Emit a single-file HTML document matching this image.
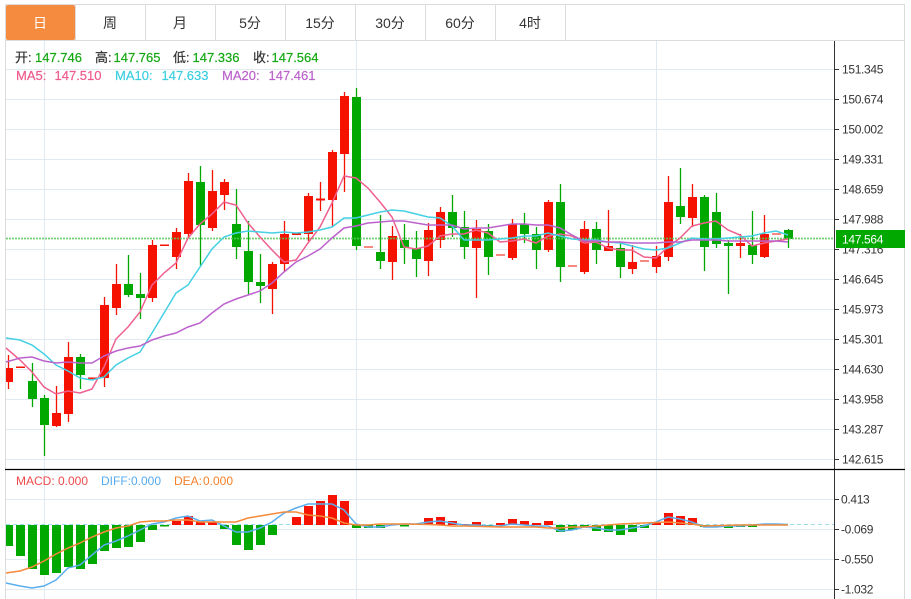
<!DOCTYPE html>
<html><head><meta charset="utf-8"><style>
html,body{margin:0;padding:0;background:#fff;width:911px;height:599px;overflow:hidden}
svg{display:block}
text{font-family:"Liberation Sans","Noto Sans CJK SC",sans-serif}
.a{font-size:12px;letter-spacing:-.33px;fill:#333}
.t{font-size:14px;fill:#333;text-anchor:middle}
.l{font-size:13px;stroke-width:.2px}
</style></head><body>
<svg width="911" height="599" viewBox="0 0 911 599" xmlns="http://www.w3.org/2000/svg">
<rect x="6" y="5" width="69" height="35" rx="2" fill="#f58b3f"/>
<path d="M5.5 4.5H904.5V599M5.5 4.5V599M5 40.5H905M75.5 5V40M145.5 5V40M215.5 5V40M285.5 5V40M355.5 5V40M425.5 5V40M495.5 5V40M565.5 5V40" fill="none" stroke="#dcdcdc" stroke-width="1"/>
<path d="M6 69.500H834M6 99.500H834M6 129.500H834M6 159.500H834M6 189.500H834M6 219.500H834M6 249.500H834M6 279.500H834M6 309.500H834M6 339.500H834M6 369.500H834M6 399.500H834M6 429.500H834M6 459.500H834M6 499.500H834M6 529.500H834M6 559.500H834M6 589.500H834M44.500 41V599M356.500 41V599M656.500 41V599" fill="none" stroke="#e0eaf0" stroke-width="1"/>
<text class="t" x="40" y="28" style="fill:#fff">日</text>
<text class="t" x="110" y="28">周</text>
<text class="t" x="180" y="28">月</text>
<text class="t" x="250" y="28">5分</text>
<text class="t" x="320" y="28">15分</text>
<text class="t" x="390" y="28">30分</text>
<text class="t" x="460" y="28">60分</text>
<text class="t" x="530" y="28">4时</text>
<path fill="#f51200" d="M6 368h7v14h-7zM52 413h9v13h-9zM64 357h9v57h-9zM100 305h9v73h-9zM112 284h9v24h-9zM148 245h9v53h-9zM172 232h9v25h-9zM184 181h9v53h-9zM208 191h9v37h-9zM220 182h9v13h-9zM268 264h9v25h-9zM280 234h9v30h-9zM304 196h9v38h-9zM328 152h9v48h-9zM340 96h9v58h-9zM388 236h9v26h-9zM424 230h9v31h-9zM436 212h9v28h-9zM472 229h9v19h-9zM508 224h9v34h-9zM544 202h9v48h-9zM580 229h9v43h-9zM604 246h9v5h-9zM628 262h9v7h-9zM652 256h9v11h-9zM664 202h9v55h-9zM688 197h9v21h-9zM736 243h9v3h-9zM760 234h9v23h-9zM16 366.500h9v1.500h-9zM88 377.500h9v1.500h-9zM160 244.500h9v1.500h-9zM292 233.500h9v1.500h-9zM316 198.500h9v2h-9z"/>
<path fill="#f78a80" d="M364 246h9v2h-9zM496 254h9v2h-9zM568 265h9v2h-9zM640 260h9v2h-9zM772 233h9v2h-9z"/>
<path stroke="#f51200" stroke-width="1.300" fill="none" d="M8.500 355v34M56.500 386v41M68.500 342v80M104.500 297v90M116.500 264v51M152.500 240v62M176.500 228v41M188.500 173v65M212.500 170v61M224.500 179v31M272.500 262v52M284.500 221v51M308.500 193v48M320.500 182v29M332.500 150v77M344.500 92v100M392.500 226v54M428.500 223v53M440.500 207v41M476.500 220v78M512.500 219v41M548.500 200v52M584.500 221v53M608.500 210v41M632.500 245v29M656.500 246v27M668.500 176v85M692.500 184v43M740.500 234v24M764.500 215v43"/>
<path fill="#00a800" d="M28 381h9v18h-9zM40 398h9v27h-9zM76 357h9v18h-9zM124 284h9v11h-9zM136 294h9v4h-9zM196 182h9v43h-9zM232 224h9v23h-9zM244 251h9v31h-9zM256 282h9v4h-9zM352 97h9v149h-9zM376 252h9v9h-9zM400 240h9v8h-9zM412 248h9v11h-9zM448 212h9v16h-9zM460 227h9v20h-9zM484 231h9v26h-9zM520 224h9v10h-9zM532 234h9v16h-9zM556 202h9v65h-9zM592 229h9v21h-9zM616 248h9v19h-9zM676 206h9v11h-9zM700 197h9v50h-9zM712 212h9v32h-9zM724 243h9v3h-9zM748 245h9v10h-9zM784 230h9v9h-9z"/>
<path stroke="#00a800" stroke-width="1.300" fill="none" d="M32.500 363v44M44.500 395v61M80.500 354v35M128.500 255v42M140.500 273v46M200.500 166v101M236.500 189v70M248.500 221v73M260.500 254v49M356.500 88v162M380.500 215v54M404.500 224v40M416.500 231v46M452.500 195v42M464.500 211v48M488.500 224v51M524.500 213v30M536.500 227v42M560.500 184v98M596.500 222v42M620.500 242v36M680.500 168v56M704.500 195v76M716.500 193v55M728.500 240v54M752.500 211v53M788.500 229v19"/>
<path d="M6 238.500H834" stroke="#5cc65c" stroke-width="1.800" stroke-dasharray="2 1" fill="none" opacity=".85"/>
<polyline fill="none" stroke="#f0608e" stroke-width="1.500" points="6,348 20,360 32,372 44,387 56,394 68,391 80,393 92,389 104,367 116,339 128,327 140,312 152,285 164,273 176,263 188,238 200,224 212,214 224,202 236,205 248,223 260,237 272,250 284,262 296,260 308,243 320,227 332,203 344,176 356,178 368,188 380,202 392,217 404,247 416,249 428,246 440,236 452,234 464,234 476,230 488,233 500,242 512,241 524,239 536,243 548,236 560,234 572,236 584,243 596,242 608,248 620,250 632,250 644,257 656,258 668,247 680,238 692,226 704,223 716,221 728,230 740,235 752,246 764,243 776,241 788,239"/>
<polyline fill="none" stroke="#45d0e4" stroke-width="1.500" points="6,338 20,340 32,345 44,354 56,365 68,371 80,378 92,380 104,377 116,365 128,358 140,352 152,333 164,313 176,293 188,285 200,267 212,249 224,237 236,233 248,231 260,232 272,233 284,232 296,233 308,232 320,230 332,227 344,218 356,218 368,215 380,212 392,210 404,211 416,214 428,217 440,218 452,226 464,240 476,240 488,240 500,239 512,238 524,236 536,236 548,233 560,236 572,239 584,240 596,240 608,242 620,243 632,246 644,249 656,250 668,248 680,243 692,238 704,239 716,239 728,238 740,237 752,236 764,233 776,231 788,235"/>
<polyline fill="none" stroke="#bb62cc" stroke-width="1.500" points="6,362 20,358 32,357 44,361 56,363 68,362 80,363 92,363 104,356 116,351 128,348 140,346 152,340 164,336 176,333 188,327 200,323 212,313 224,304 236,299 248,295 260,291 272,283 284,272 296,262 308,256 320,249 332,238 344,228 356,226 368,223 380,222 392,221 404,221 416,223 428,225 440,225 452,225 464,229 476,228 488,228 500,226 512,224 524,224 536,225 548,225 560,228 572,235 584,241 596,241 608,242 620,242 632,243 644,243 656,243 668,242 680,242 692,240 704,240 716,240 728,241 740,241 752,241 764,241 776,241 788,242"/>
<path d="M834.500 41V599M834 69.500h5M834 99.500h5M834 129.500h5M834 159.500h5M834 189.500h5M834 219.500h5M834 249.500h5M834 279.500h5M834 309.500h5M834 339.500h5M834 369.500h5M834 399.500h5M834 429.500h5M834 459.500h5M834 499.500h5M834 529.500h5M834 559.500h5M834 589.500h5" fill="none" stroke="#333" stroke-width="1"/>
<text class="a" x="842" y="73.500">151.345</text>
<text class="a" x="842" y="103.500">150.674</text>
<text class="a" x="842" y="133.500">150.002</text>
<text class="a" x="842" y="163.500">149.331</text>
<text class="a" x="842" y="193.500">148.659</text>
<text class="a" x="842" y="223.500">147.988</text>
<text class="a" x="842" y="253.500">147.316</text>
<text class="a" x="842" y="283.500">146.645</text>
<text class="a" x="842" y="313.500">145.973</text>
<text class="a" x="842" y="343.500">145.301</text>
<text class="a" x="842" y="373.500">144.630</text>
<text class="a" x="842" y="403.500">143.958</text>
<text class="a" x="842" y="433.500">143.287</text>
<text class="a" x="842" y="463.500">142.615</text>
<rect x="836" y="230" width="69" height="18" fill="#00a800"/>
<text class="a" x="842" y="243.500" style="fill:#fff">147.564</text>
<text class="l" x="15" y="62" fill="#333" stroke="#333">开:</text><text class="l" x="35" y="62" fill="#13a813" stroke="#13a813">147.746</text>
<text class="l" x="95" y="62" fill="#333" stroke="#333">高:</text><text class="l" x="113.500" y="62" fill="#13a813" stroke="#13a813">147.765</text>
<text class="l" x="173" y="62" fill="#333" stroke="#333">低:</text><text class="l" x="192.500" y="62" fill="#13a813" stroke="#13a813">147.336</text>
<text class="l" x="253" y="62" fill="#333" stroke="#333">收:</text><text class="l" x="271.500" y="62" fill="#13a813" stroke="#13a813">147.564</text>
<text class="l" x="16" y="80" fill="#ee5a8a" stroke="#ee5a8a">MA5:</text><text class="l" x="54.500" y="80" fill="#ee5a8a" stroke="#ee5a8a">147.510</text>
<text class="l" x="115" y="80" fill="#3ccfe0" stroke="#3ccfe0">MA10:</text><text class="l" x="161.500" y="80" fill="#3ccfe0" stroke="#3ccfe0">147.633</text>
<text class="l" x="222" y="80" fill="#bb62cc" stroke="#bb62cc">MA20:</text><text class="l" x="268.500" y="80" fill="#bb62cc" stroke="#bb62cc">147.461</text>
<path d="M5 469.500H905" stroke="#000" stroke-width="1.200" fill="none"/>
<text x="16" y="485" font-size="12" fill="#f04a4a">MACD:</text><text x="58" y="485" font-size="12" fill="#f04a4a">0.000</text>
<text x="101" y="485" font-size="12" fill="#55aaf0">DIFF:</text><text x="131" y="485" font-size="12" fill="#55aaf0">0.000</text>
<text x="174" y="485" font-size="12" fill="#f5802a">DEA:</text><text x="203" y="485" font-size="12" fill="#f5802a">0.000</text>
<path d="M6 524.500H834" stroke="#9ddcea" stroke-width="1" stroke-dasharray="4 3" fill="none"/>
<text class="a" x="841" y="503.500">0.413</text>
<text class="a" x="841" y="533.500">-0.069</text>
<text class="a" x="841" y="563.500">-0.550</text>
<text class="a" x="841" y="593.500">-1.032</text>
<path fill="#00a800" d="M6 525h7v21h-7zM16 525h9v31h-9zM28 525h9v44h-9zM40 525h9v50h-9zM52 525h9v48h-9zM64 525h9v42h-9zM76 525h9v44h-9zM88 525h9v39h-9zM100 525h9v26h-9zM112 525h9v23h-9zM124 525h9v22h-9zM136 525h9v17h-9zM148 525h9v5h-9zM160 525h9v1.500h-9zM220 525h9v4h-9zM232 525h9v20h-9zM244 525h9v25h-9zM256 525h9v20h-9zM268 525h9v10h-9zM352 525h9v3h-9zM364 525h9v3h-9zM376 525h9v3h-9zM400 525h9v1.500h-9zM484 525h9v2h-9zM556 525h9v7h-9zM568 525h9v5h-9zM580 525h9v2h-9zM592 525h9v6h-9zM604 525h9v7h-9zM616 525h9v10h-9zM628 525h9v7h-9zM640 525h9v3h-9zM700 525h9v2h-9zM712 525h9v2h-9zM724 525h9v3h-9zM736 525h9v2h-9zM748 525h9v2h-9z"/>
<path fill="#f51200" d="M172 521h9v4h-9zM184 516h9v9h-9zM196 522h9v3h-9zM208 522h9v3h-9zM292 517h9v8h-9zM304 506h9v19h-9zM316 501h9v24h-9zM328 495h9v30h-9zM340 501h9v24h-9zM424 518h9v7h-9zM436 517h9v8h-9zM448 521h9v4h-9zM460 524h9v1h-9zM472 522h9v3h-9zM496 523h9v2h-9zM508 519h9v6h-9zM520 521h9v4h-9zM532 523h9v2h-9zM544 521h9v4h-9zM652 522h9v3h-9zM664 513h9v12h-9zM676 516h9v9h-9zM688 518h9v7h-9z"/>
<polyline fill="none" stroke="#5aaef0" stroke-width="1.500" points="6,583 20,586 32,588 44,586 56,580 68,568 80,565 92,555 104,545 116,541 128,536 140,530 152,524 164,522 176,518 188,516 200,521 212,520 224,526 236,532 248,532 260,528 272,522 284,513 296,508 308,504 320,504 332,504 344,510 356,524 368,527 380,527 392,525 404,524 416,524 428,522 440,521 452,523 464,525 476,525 488,526 500,526 512,524 524,525 536,526 548,526 560,531 572,530 584,527 596,528 608,530 620,530 632,528 644,526 656,522 668,517 680,519 692,522 704,527 716,527 728,526 740,526 752,525 764,524 776,524 788,524.500"/>
<polyline fill="none" stroke="#f58a3a" stroke-width="1.500" points="6,573 20,571 32,567 44,561 56,554 68,548 80,543 92,537 104,532 116,528 128,526 140,522 152,521 164,521 176,520 188,520 200,522 212,522 224,522 236,522 248,518 260,516 272,514 284,512 296,512 308,515 320,516 332,518 344,523 356,525 368,525 380,524 404,524 428,524.500 440,525 452,526 464,526 500,527 536,527 548,528 560,528 572,527 584,527 620,524 644,523 668,522 692,524 704,526 740,525 788,525"/>
</svg>
</body></html>
